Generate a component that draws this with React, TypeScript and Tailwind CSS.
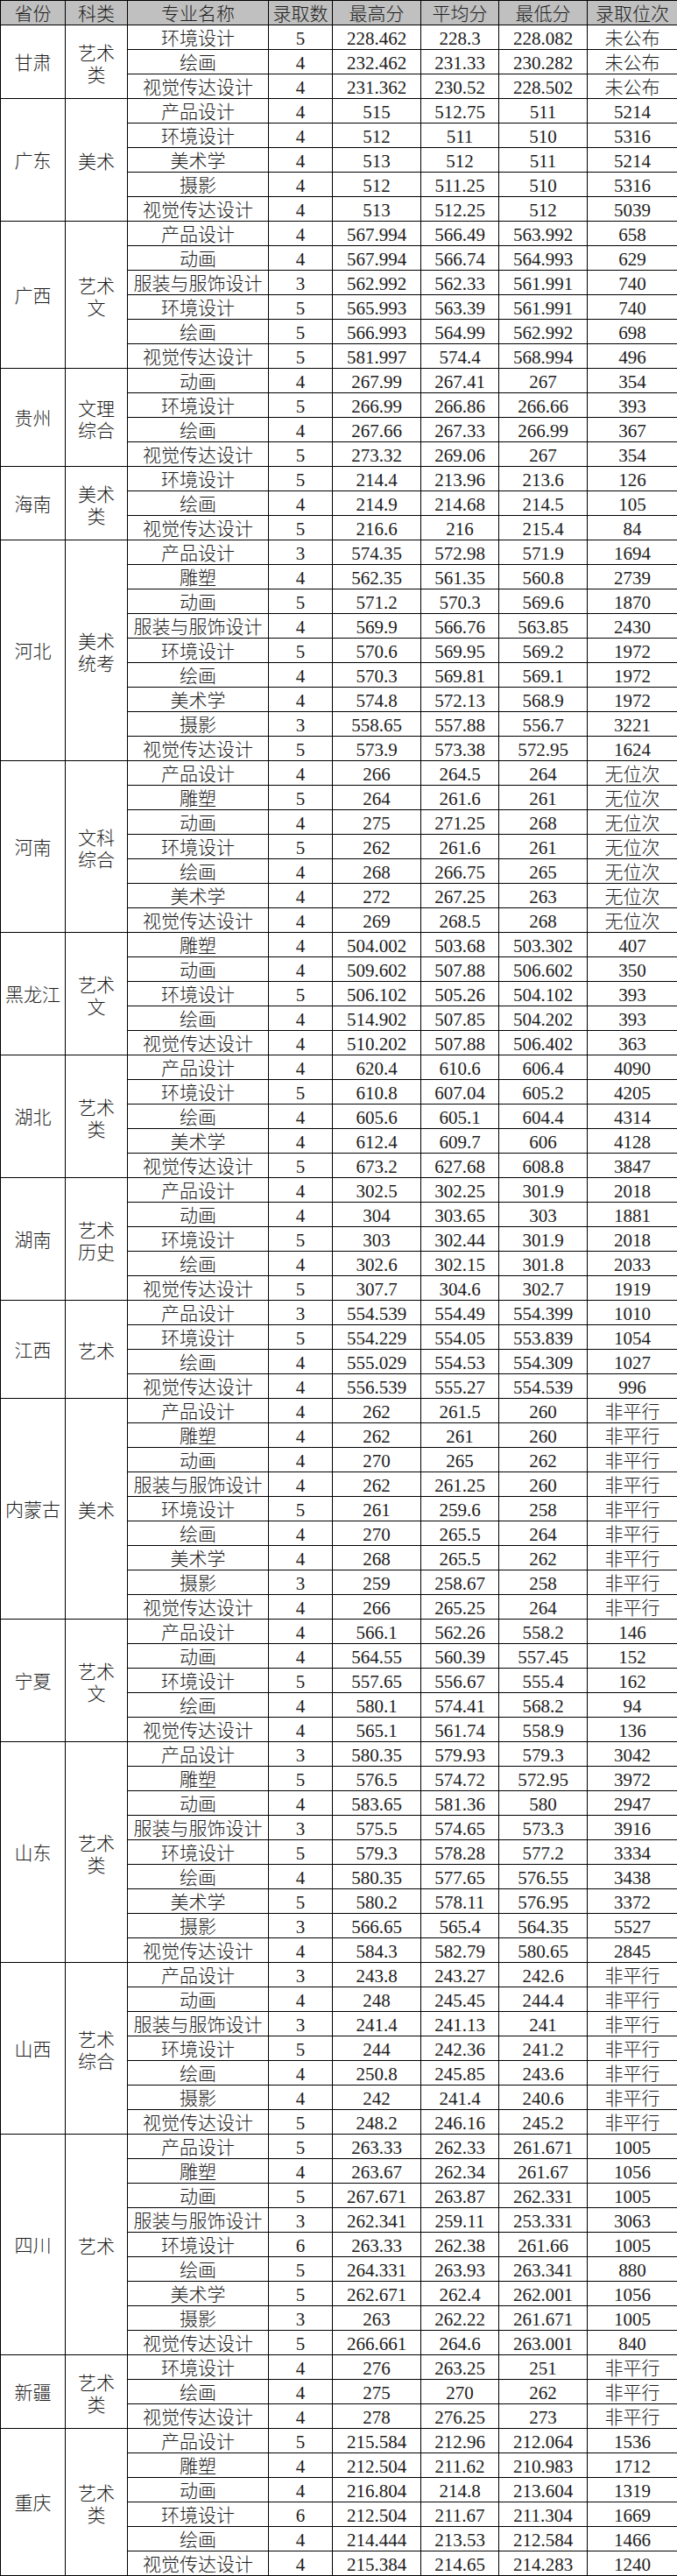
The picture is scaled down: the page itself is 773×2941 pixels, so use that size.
import React from 'react';

interface Group {
	province: string;
	category: string[];
	rows: string[];
}

const groups: Group[] = [
	{
		province: '甘肃',
		category: ['艺术', '类'],
		rows: [
			'环境设计 5 228.462 228.3 228.082 未公布',
			'绘画 4 232.462 231.33 230.282 未公布',
			'视觉传达设计 4 231.362 230.52 228.502 未公布',
		],
	},
	{
		province: '广东',
		category: ['美术'],
		rows: [
			'产品设计 4 515 512.75 511 5214',
			'环境设计 4 512 511 510 5316',
			'美术学 4 513 512 511 5214',
			'摄影 4 512 511.25 510 5316',
			'视觉传达设计 4 513 512.25 512 5039',
		],
	},
	{
		province: '广西',
		category: ['艺术', '文'],
		rows: [
			'产品设计 4 567.994 566.49 563.992 658',
			'动画 4 567.994 566.74 564.993 629',
			'服装与服饰设计 3 562.992 562.33 561.991 740',
			'环境设计 5 565.993 563.39 561.991 740',
			'绘画 5 566.993 564.99 562.992 698',
			'视觉传达设计 5 581.997 574.4 568.994 496',
		],
	},
	{
		province: '贵州',
		category: ['文理', '综合'],
		rows: [
			'动画 4 267.99 267.41 267 354',
			'环境设计 5 266.99 266.86 266.66 393',
			'绘画 4 267.66 267.33 266.99 367',
			'视觉传达设计 5 273.32 269.06 267 354',
		],
	},
	{
		province: '海南',
		category: ['美术', '类'],
		rows: [
			'环境设计 5 214.4 213.96 213.6 126',
			'绘画 4 214.9 214.68 214.5 105',
			'视觉传达设计 5 216.6 216 215.4 84',
		],
	},
	{
		province: '河北',
		category: ['美术', '统考'],
		rows: [
			'产品设计 3 574.35 572.98 571.9 1694',
			'雕塑 4 562.35 561.35 560.8 2739',
			'动画 5 571.2 570.3 569.6 1870',
			'服装与服饰设计 4 569.9 566.76 563.85 2430',
			'环境设计 5 570.6 569.95 569.2 1972',
			'绘画 4 570.3 569.81 569.1 1972',
			'美术学 4 574.8 572.13 568.9 1972',
			'摄影 3 558.65 557.88 556.7 3221',
			'视觉传达设计 5 573.9 573.38 572.95 1624',
		],
	},
	{
		province: '河南',
		category: ['文科', '综合'],
		rows: [
			'产品设计 4 266 264.5 264 无位次',
			'雕塑 5 264 261.6 261 无位次',
			'动画 4 275 271.25 268 无位次',
			'环境设计 5 262 261.6 261 无位次',
			'绘画 4 268 266.75 265 无位次',
			'美术学 4 272 267.25 263 无位次',
			'视觉传达设计 4 269 268.5 268 无位次',
		],
	},
	{
		province: '黑龙江',
		category: ['艺术', '文'],
		rows: [
			'雕塑 4 504.002 503.68 503.302 407',
			'动画 4 509.602 507.88 506.602 350',
			'环境设计 5 506.102 505.26 504.102 393',
			'绘画 4 514.902 507.85 504.202 393',
			'视觉传达设计 4 510.202 507.88 506.402 363',
		],
	},
	{
		province: '湖北',
		category: ['艺术', '类'],
		rows: [
			'产品设计 4 620.4 610.6 606.4 4090',
			'环境设计 5 610.8 607.04 605.2 4205',
			'绘画 4 605.6 605.1 604.4 4314',
			'美术学 4 612.4 609.7 606 4128',
			'视觉传达设计 5 673.2 627.68 608.8 3847',
		],
	},
	{
		province: '湖南',
		category: ['艺术', '历史'],
		rows: [
			'产品设计 4 302.5 302.25 301.9 2018',
			'动画 4 304 303.65 303 1881',
			'环境设计 5 303 302.44 301.9 2018',
			'绘画 4 302.6 302.15 301.8 2033',
			'视觉传达设计 5 307.7 304.6 302.7 1919',
		],
	},
	{
		province: '江西',
		category: ['艺术'],
		rows: [
			'产品设计 3 554.539 554.49 554.399 1010',
			'环境设计 5 554.229 554.05 553.839 1054',
			'绘画 4 555.029 554.53 554.309 1027',
			'视觉传达设计 4 556.539 555.27 554.539 996',
		],
	},
	{
		province: '内蒙古',
		category: ['美术'],
		rows: [
			'产品设计 4 262 261.5 260 非平行',
			'雕塑 4 262 261 260 非平行',
			'动画 4 270 265 262 非平行',
			'服装与服饰设计 4 262 261.25 260 非平行',
			'环境设计 5 261 259.6 258 非平行',
			'绘画 4 270 265.5 264 非平行',
			'美术学 4 268 265.5 262 非平行',
			'摄影 3 259 258.67 258 非平行',
			'视觉传达设计 4 266 265.25 264 非平行',
		],
	},
	{
		province: '宁夏',
		category: ['艺术', '文'],
		rows: [
			'产品设计 4 566.1 562.26 558.2 146',
			'动画 4 564.55 560.39 557.45 152',
			'环境设计 5 557.65 556.67 555.4 162',
			'绘画 4 580.1 574.41 568.2 94',
			'视觉传达设计 4 565.1 561.74 558.9 136',
		],
	},
	{
		province: '山东',
		category: ['艺术', '类'],
		rows: [
			'产品设计 3 580.35 579.93 579.3 3042',
			'雕塑 5 576.5 574.72 572.95 3972',
			'动画 4 583.65 581.36 580 2947',
			'服装与服饰设计 3 575.5 574.65 573.3 3916',
			'环境设计 5 579.3 578.28 577.2 3334',
			'绘画 4 580.35 577.65 576.55 3438',
			'美术学 5 580.2 578.11 576.95 3372',
			'摄影 3 566.65 565.4 564.35 5527',
			'视觉传达设计 4 584.3 582.79 580.65 2845',
		],
	},
	{
		province: '山西',
		category: ['艺术', '综合'],
		rows: [
			'产品设计 3 243.8 243.27 242.6 非平行',
			'动画 4 248 245.45 244.4 非平行',
			'服装与服饰设计 3 241.4 241.13 241 非平行',
			'环境设计 5 244 242.36 241.2 非平行',
			'绘画 4 250.8 245.85 243.6 非平行',
			'摄影 4 242 241.4 240.6 非平行',
			'视觉传达设计 5 248.2 246.16 245.2 非平行',
		],
	},
	{
		province: '四川',
		category: ['艺术'],
		rows: [
			'产品设计 5 263.33 262.33 261.671 1005',
			'雕塑 4 263.67 262.34 261.67 1056',
			'动画 5 267.671 263.87 262.331 1005',
			'服装与服饰设计 3 262.341 259.11 253.331 3063',
			'环境设计 6 263.33 262.38 261.66 1005',
			'绘画 5 264.331 263.93 263.341 880',
			'美术学 5 262.671 262.4 262.001 1056',
			'摄影 3 263 262.22 261.671 1005',
			'视觉传达设计 5 266.661 264.6 263.001 840',
		],
	},
	{
		province: '新疆',
		category: ['艺术', '类'],
		rows: [
			'环境设计 4 276 263.25 251 非平行',
			'绘画 4 275 270 262 非平行',
			'视觉传达设计 4 278 276.25 273 非平行',
		],
	},
	{
		province: '重庆',
		category: ['艺术', '类'],
		rows: [
			'产品设计 5 215.584 212.96 212.064 1536',
			'雕塑 4 212.504 211.62 210.983 1712',
			'动画 4 216.804 214.8 213.604 1319',
			'环境设计 6 212.504 211.67 211.304 1669',
			'绘画 4 214.444 213.53 212.584 1466',
			'视觉传达设计 4 215.384 214.65 214.283 1240',
		],
	},
];

const headers = ['省份', '科类', '专业名称', '录取数', '最高分', '平均分', '最低分', '录取位次'];
const widths = [74, 71, 161, 73, 101, 89, 101, 103];

const cell = 'border border-black p-0 h-[28px] text-center align-middle leading-none';

export default function App() {
	return (
		<div className="w-[773px] bg-white text-[#1c1c1c] font-['Liberation_Serif','Noto_Sans_CJK_SC',serif] text-[21px] font-light">
			<table className="w-[773px] table-fixed border-collapse">
				<colgroup>
					{widths.map((w, i) => (
						<col key={i} style={{ width: w }} />
					))}
				</colgroup>
				<thead>
					<tr className="bg-[#c0c0c0]">
						{headers.map((h) => (
							<th key={h} className={`${cell} font-light whitespace-nowrap`}>
								<span className="block pt-[3px]">{h}</span>
							</th>
						))}
					</tr>
				</thead>
				<tbody>
					{groups.map((g) =>
						g.rows.map((row, idx) => {
							const [name, ...nums] = row.split(' ');
							return (
								<tr key={g.province + idx}>
									{idx === 0 && (
										<>
											<td rowSpan={g.rows.length} className={`${cell} whitespace-nowrap`}>
												<span className="block pt-[4px]">{g.province}</span>
											</td>
											<td rowSpan={g.rows.length} className={cell}>
												<div className="flex flex-col items-center gap-[4px] pt-[6px]">
													{g.category.map((c) => (
														<span key={c}>{c}</span>
													))}
												</div>
											</td>
										</>
									)}
									<td className={`${cell} whitespace-nowrap`}>
										<span className="block pt-[3px]">{name}</span>
									</td>
									{nums.map((n, j) => (
										<td key={j} className={`${cell} whitespace-nowrap`}>
											<span className="block pt-[3px]">{n}</span>
										</td>
									))}
								</tr>
							);
						}),
					)}
				</tbody>
			</table>
		</div>
	);
}
